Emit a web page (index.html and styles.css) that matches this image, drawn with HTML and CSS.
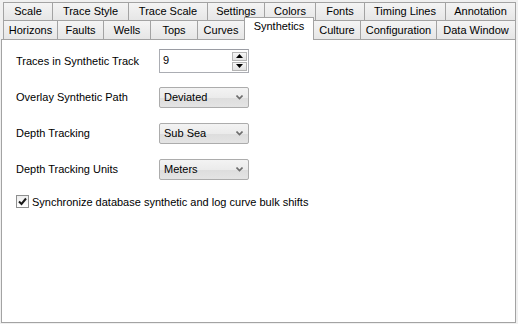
FILE: index.html
```html
<!DOCTYPE html>
<html lang="en">
<head>
    <meta charset="UTF-8">
    <title>Synthetics</title>
    <link rel="stylesheet" href="styles.css">
</head>
<body>
    <div class="tabcontrol">
        <div class="tab-row top">
            <div class="tab">Scale</div>
            <div class="tab">Trace Style</div>
            <div class="tab">Trace Scale</div>
            <div class="tab">Settings</div>
            <div class="tab">Colors</div>
            <div class="tab">Fonts</div>
            <div class="tab">Timing Lines</div>
            <div class="tab">Annotation</div>
        </div>
        <div class="tab-row bottom">
            <div class="tab">Horizons</div>
            <div class="tab">Faults</div>
            <div class="tab">Wells</div>
            <div class="tab">Tops</div>
            <div class="tab">Curves</div>
            <div class="tab selected">Synthetics</div>
            <div class="tab">Culture</div>
            <div class="tab">Configuration</div>
            <div class="tab">Data Window</div>
        </div>
        <div class="panel">
            <div class="field">
                <span class="label">Traces in Synthetic Track</span>
                <div class="spin">
                    <span class="spin-value">9</span>
                    <div class="spin-buttons">
                        <span class="spin-btn"><svg width="7" height="4" viewBox="0 0 7 4"><path d="M0 4 L3.5 0 L7 4 Z" fill="#000"/></svg></span>
                        <span class="spin-btn"><svg width="7" height="4" viewBox="0 0 7 4"><path d="M0 0 L3.5 4 L7 0 Z" fill="#000"/></svg></span>
                    </div>
                </div>
            </div>
            <div class="field">
                <span class="label">Overlay Synthetic Path</span>
                <div class="combo">
                    <span>Deviated</span>
                    <svg class="chevron" width="7" height="5" viewBox="0 0 7 5"><path d="M0.5 0.5 L3.5 3.5 L6.5 0.5" fill="none" stroke="#6d6d6d" stroke-width="1.6"/></svg>
                </div>
            </div>
            <div class="field">
                <span class="label">Depth Tracking</span>
                <div class="combo">
                    <span>Sub Sea</span>
                    <svg class="chevron" width="7" height="5" viewBox="0 0 7 5"><path d="M0.5 0.5 L3.5 3.5 L6.5 0.5" fill="none" stroke="#6d6d6d" stroke-width="1.6"/></svg>
                </div>
            </div>
            <div class="field">
                <span class="label">Depth Tracking Units</span>
                <div class="combo">
                    <span>Meters</span>
                    <svg class="chevron" width="7" height="5" viewBox="0 0 7 5"><path d="M0.5 0.5 L3.5 3.5 L6.5 0.5" fill="none" stroke="#6d6d6d" stroke-width="1.6"/></svg>
                </div>
            </div>
            <div class="check-row">
                <span class="checkbox"><svg width="9" height="9" viewBox="0 0 9 9"><path d="M1 4.5 L3.5 7 L8 1.5" fill="none" stroke="#1a1a1a" stroke-width="2"/></svg></span>
                <span>Synchronize database synthetic and log curve bulk shifts</span>
            </div>
        </div>
    </div>
</body>
</html>
```

FILE: styles.css
```css
html, body {
    margin: 0;
    height: 100%;
}
body {
    background-color: #f0f0f0;
    font-family: "Liberation Sans", Arial, sans-serif;
    font-size: 11px;
    color: #000;
}
.tabcontrol {
    width: 515px;
    height: 323px;
    margin-left: 1px;
    padding-top: 2px;
    box-sizing: border-box;
    display: flex;
    flex-direction: column;
}
.tab-row {
    display: flex;
    align-items: flex-end;
    margin-left: 2px;
}
.tab-row.top {
    height: 18px;
}
.tab-row.bottom {
    height: 19px;
}
.tab {
    flex: none;
    height: 100%;
    box-sizing: border-box;
    margin-left: -1px;
    border: 1px solid #a3a3a3;
    border-bottom: none;
    background: linear-gradient(#f4f4f4, #e6e6e6);
    text-align: center;
    white-space: nowrap;
    line-height: 17px;
}
.tab:first-child {
    margin-left: 0;
}
.tab:last-child {
    flex: 1;
}

/* tab widths, as the control lays them out */
.tab-row.top .tab:nth-child(1) { width: 50px; }
.tab-row.top .tab:nth-child(2) { width: 77px; }
.tab-row.top .tab:nth-child(3) { width: 80px; }
.tab-row.top .tab:nth-child(4) { width: 58px; }
.tab-row.top .tab:nth-child(5) { width: 52px; }
.tab-row.top .tab:nth-child(6) { width: 50px; }
.tab-row.top .tab:nth-child(7) { width: 82px; }
.tab-row.bottom .tab:nth-child(1) { width: 55px; }
.tab-row.bottom .tab:nth-child(2) { width: 47px; }
.tab-row.bottom .tab:nth-child(3) { width: 48px; }
.tab-row.bottom .tab:nth-child(4) { width: 48px; }
.tab-row.bottom .tab:nth-child(5) { width: 48px; }
.tab-row.bottom .tab:nth-child(6) { width: 70px; }
.tab-row.bottom .tab:nth-child(7) { width: 48px; }
.tab-row.bottom .tab:nth-child(8) { width: 77px; }

.tab-row.bottom .tab {
    line-height: 19px;
}
.tab-row.bottom .tab.selected {
    height: 23px;
    margin-bottom: -1px;
    background: #fff;
    line-height: 17px;
    position: relative;
    z-index: 1;
}
.panel {
    flex: 1;
    background-color: #fff;
    border: 1px solid #a3a3a3;
    padding: 9px 0 0 14px;
    display: flex;
    flex-direction: column;
    gap: 12px;
}
.field {
    display: grid;
    grid-template-columns: 143px 90px;
    align-items: center;
    height: 24px;
}
.spin {
    height: 24px;
    box-sizing: border-box;
    border: 1px solid #abadb3;
    border-top-color: #9a9ca3;
    display: flex;
    align-items: center;
    justify-content: space-between;
    padding-left: 3px;
}
.spin-value {
    margin-top: -3px;
}
.spin-buttons {
    display: flex;
    flex-direction: column;
    gap: 1px;
    margin-right: 1px;
}
.spin-btn {
    width: 15px;
    height: 9px;
    box-sizing: border-box;
    border: 1px solid #b4b4b4;
    background: linear-gradient(#f6f6f6, #e2e2e2);
    display: flex;
    align-items: center;
    justify-content: center;
}
.combo {
    height: 21px;
    box-sizing: border-box;
    border: 1px solid #acacac;
    border-radius: 2px;
    background: linear-gradient(#f3f3f3 0%, #ebebeb 50%, #dddddd 51%, #e4e4e4 100%);
    display: flex;
    align-items: center;
    justify-content: space-between;
    padding: 0 5px 0 4px;
}
.check-row {
    display: flex;
    align-items: center;
    gap: 3px;
    margin-top: 2px;
}
.checkbox {
    width: 13px;
    height: 13px;
    box-sizing: border-box;
    border: 1px solid #8e8f8f;
    background: linear-gradient(#eeeeee, #ffffff);
    display: flex;
    align-items: center;
    justify-content: center;
}
```
